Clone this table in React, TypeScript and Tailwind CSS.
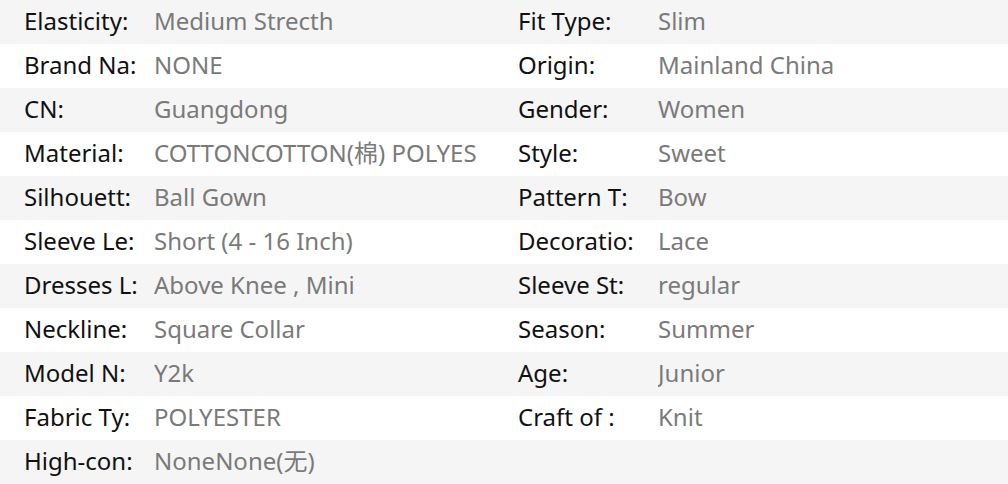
import React from 'react';

type Spec = [string, string];

const rows: [Spec, Spec | null][] = [
    [['Elasticity:', 'Medium Strecth'], ['Fit Type:', 'Slim']],
    [['Brand Na:', 'NONE'], ['Origin:', 'Mainland China']],
    [['CN:', 'Guangdong'], ['Gender:', 'Women']],
    [['Material:', 'COTTONCOTTON(棉) POLYES'], ['Style:', 'Sweet']],
    [['Silhouett:', 'Ball Gown'], ['Pattern T:', 'Bow']],
    [['Sleeve Le:', 'Short (4 - 16 Inch)'], ['Decoratio:', 'Lace']],
    [['Dresses L:', 'Above Knee , Mini'], ['Sleeve St:', 'regular']],
    [['Neckline:', 'Square Collar'], ['Season:', 'Summer']],
    [['Model N:', 'Y2k'], ['Age:', 'Junior']],
    [['Fabric Ty:', 'POLYESTER'], ['Craft of :', 'Knit']],
    [['High-con:', 'NoneNone(无)'], null],
];

const Cell: React.FC<{ spec: Spec | null; labelW: string; valueW: string }> = ({ spec, labelW, valueW }) => (
    <div className="flex h-full">
        <span className={`${labelW} shrink-0 whitespace-nowrap text-[#111]`}>{spec ? spec[0] : ''}</span>
        <span className={`${valueW} shrink-0 overflow-hidden whitespace-nowrap text-[#7a7a7a]`}>{spec ? spec[1] : ''}</span>
    </div>
);

export default function App() {
    return (
        <div className="w-[1008px] h-[484px] bg-white font-['Noto_Sans','Noto_Sans_CJK_SC',sans-serif] text-[24px] leading-[42px]">
            {rows.map(([left, right], i) => (
                <div key={i} className={`flex h-[44px] pl-6 ${i % 2 === 0 ? 'bg-[#f5f5f5]' : 'bg-white'}`}>
                    <Cell spec={left} labelW="w-[130px]" valueW="w-[364px]" />
                    <Cell spec={right} labelW="w-[140px]" valueW="w-[300px]" />
                </div>
            ))}
        </div>
    );
}
